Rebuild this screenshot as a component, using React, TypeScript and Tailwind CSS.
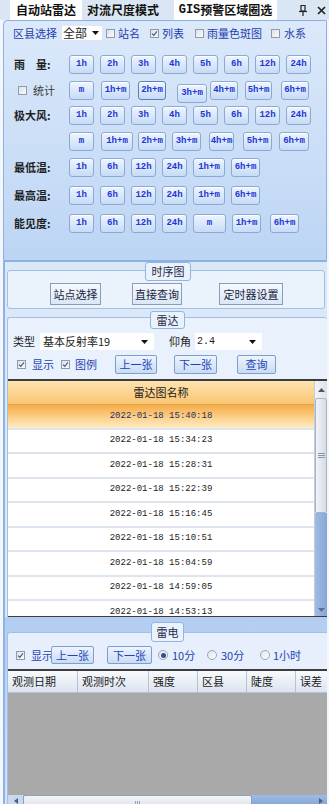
import React from "react";

type BtnProps = { t: string; c: string };

// 小时按钮（蓝色粗体等宽字）
const HBtn = ({ t, c }: BtnProps) => (
  <div
    className={`flex h-[19px] shrink-0 items-center justify-center rounded-[3px] border bg-gradient-to-b from-[#eef5fe] to-[#c6dbf7] font-['Liberation_Mono',monospace] text-[9px] leading-none font-bold whitespace-nowrap text-[#2236d6] shadow-[inset_0_1px_0_#ffffff] ${c}`}
  >
    {t}
  </div>
);

const RBtn = ({ t, c }: BtnProps) => (
  <div
    className={`flex shrink-0 items-center justify-center rounded-[2px] border border-[#7f9ecb] bg-gradient-to-b from-[#edf4fd] to-[#c9dcf5] text-[11px] leading-none whitespace-nowrap text-[#2343b5] ${c}`}
  >
    {t}
  </div>
);

const Lbl = ({ t }: { t: string }) => (
  <div className="w-[55px] shrink-0 text-[11px] leading-none font-bold whitespace-nowrap text-[#1e1e1e]">{t}</div>
);

const Check = ({ on, c = "" }: { on?: boolean; c?: string }) => (
  <span
    className={`relative inline-block h-[9px] w-[9px] shrink-0 border border-[#8e9bad] bg-gradient-to-br from-[#dde2e8] to-[#fbfbfb] ${c}`}
  >
    {on && (
      <svg viewBox="0 0 7 7" className="absolute inset-0 h-full w-full">
        <path d="M1 3.6 L2.8 5.3 L6 1.4" fill="none" stroke="#4a5f82" strokeWidth="1.2" />
      </svg>
    )}
  </span>
);

const Radio = ({ on, c = "" }: { on?: boolean; c?: string }) => (
  <span
    className={`flex h-[10px] w-[10px] shrink-0 items-center justify-center rounded-full border border-[#9aa7b8] bg-gradient-to-br from-[#dfe4ea] to-[#ffffff] ${c}`}
  >
    {on && <span className="h-[5px] w-[5px] rounded-full bg-[#2d4f96]" />}
  </span>
);

const Arrow = () => (
  <svg width="7" height="4" viewBox="0 0 7 4" className="shrink-0">
    <path d="M0 0 H7 L3.5 4 Z" fill="#111" />
  </svg>
);

const TabBar = () => (
  <div className="flex h-[20px] shrink-0 items-stretch bg-[#dbe6f4] text-[12px] leading-none font-bold whitespace-nowrap text-[#111]">
    <div className="ml-[10px] flex w-[72px] items-center justify-center bg-white">自动站雷达</div>
    <div className="ml-[2px] flex w-[78px] items-center justify-center">对流尺度模式</div>
    <div className="ml-[12px] flex w-[103px] items-center justify-center bg-white">
      <span className="font-['Liberation_Mono',monospace]">GIS</span>预警区域圈选
    </div>
    <div className="ml-[22px] flex items-center">
      <svg width="8" height="11" viewBox="0 0 8 11">
        <path d="M2 0.5 H6 V6 H2 Z" fill="none" stroke="#222" strokeWidth="1.2" />
        <path d="M0 6.5 H8" stroke="#222" strokeWidth="1.2" />
        <path d="M4 6.5 V11" stroke="#222" strokeWidth="1.2" />
      </svg>
    </div>
    <div className="ml-[10px] flex items-center">
      <svg width="9" height="9" viewBox="0 0 9 9">
        <path d="M1 1 L8 8 M8 1 L1 8" stroke="#222" strokeWidth="1.7" />
      </svg>
    </div>
  </div>
);

const TopPanel = () => (
  <div className="flex h-[241px] shrink-0 flex-col rounded-tl-[4px] border border-[#8db0de] bg-gradient-to-b from-[#dce9fa] to-[#bcd5f4]">
    {/* 区县选择 */}
    <div className="mt-[5px] flex h-[14px] items-center text-[11px] leading-none whitespace-nowrap">
      <span className="ml-[9px] w-[44px] text-[#1f3fae]">区县选择</span>
      <div className="ml-[5px] flex h-[14px] w-[40px] items-center justify-between bg-white pr-[3px] pl-[1px] text-[12px]">
        <span>全部</span>
        <Arrow />
      </div>
      <Check c="ml-[4px]" />
      <span className="ml-[3px] w-[24px] text-[#1f3fae]">站名</span>
      <Check on c="ml-[8px]" />
      <span className="ml-[3px] w-[24px] text-[#1f3fae]">列表</span>
      <Check c="ml-[9px]" />
      <span className="ml-[3px] w-[56px] text-[#1f3fae]">雨量色斑图</span>
      <Check c="ml-[8px]" />
      <span className="ml-[4px] text-[#1f3fae]">水系</span>
    </div>

    {/* 雨量 */}
    <div className="mt-[15px] flex h-[19px] items-center pl-[10px]">
      <Lbl t="雨　量:" />
      <HBtn t="1h" c="w-[25px] border-[#8ea9d1]" />
      <HBtn t="2h" c="ml-[6px] w-[25px] border-[#8ea9d1]" />
      <HBtn t="3h" c="ml-[6px] w-[25px] border-[#8ea9d1]" />
      <HBtn t="4h" c="ml-[6px] w-[25px] border-[#8ea9d1]" />
      <HBtn t="5h" c="ml-[6px] w-[25px] border-[#8ea9d1]" />
      <HBtn t="6h" c="ml-[6px] w-[25px] border-[#8ea9d1]" />
      <HBtn t="12h" c="ml-[6px] w-[25px] border-[#8ea9d1]" />
      <HBtn t="24h" c="ml-[6px] w-[25px] border-[#8ea9d1]" />
    </div>

    {/* 统计 */}
    <div className="mt-[7px] flex h-[19px] items-center pl-[14px]">
      <Check />
      <span className="ml-[6px] w-[36px] text-[11px] leading-none whitespace-nowrap text-[#3a3a3a]">统计</span>
      <HBtn t="m" c="w-[25px] border-[#8ea9d1]" />
      <HBtn t="1h+m" c="ml-[7px] w-[29px] border-[#8ea9d1]" />
      <HBtn t="2h+m" c="ml-[8px] w-[28px] border-[#5f7fae]" />
      <HBtn t="3h+m" c="ml-[11px] mt-[6px] w-[30px] border-[#8ea9d1]" />
      <HBtn t="4h+m" c="ml-[3px] w-[28px] border-[#8ea9d1]" />
      <HBtn t="5h+m" c="ml-[7px] w-[27px] border-[#8ea9d1]" />
      <HBtn t="6h+m" c="ml-[9px] w-[28px] border-[#8ea9d1]" />
    </div>

    {/* 极大风 */}
    <div className="mt-[6px] flex h-[19px] items-center pl-[10px]">
      <Lbl t="极大风:" />
      <HBtn t="1h" c="w-[25px] border-[#8ea9d1]" />
      <HBtn t="2h" c="ml-[6px] w-[25px] border-[#8ea9d1]" />
      <HBtn t="3h" c="ml-[6px] w-[25px] border-[#8ea9d1]" />
      <HBtn t="4h" c="ml-[6px] w-[25px] border-[#8ea9d1]" />
      <HBtn t="5h" c="ml-[6px] w-[25px] border-[#8ea9d1]" />
      <HBtn t="6h" c="ml-[6px] w-[25px] border-[#8ea9d1]" />
      <HBtn t="12h" c="ml-[6px] w-[25px] border-[#8ea9d1]" />
      <HBtn t="24h" c="ml-[6px] w-[25px] border-[#8ea9d1]" />
    </div>
    <div className="mt-[7px] flex h-[19px] items-center pl-[65px]">
      <HBtn t="m" c="w-[25px] border-[#8ea9d1]" />
      <HBtn t="1h+m" c="ml-[7px] w-[32px] border-[#8ea9d1]" />
      <HBtn t="2h+m" c="ml-[5px] w-[28px] border-[#8ea9d1]" />
      <HBtn t="3h+m" c="ml-[6px] w-[29px] border-[#8ea9d1]" />
      <HBtn t="4h+m" c="ml-[8px] w-[25px] border-[#8ea9d1]" />
      <HBtn t="5h+m" c="ml-[9px] w-[29px] border-[#8ea9d1]" />
      <HBtn t="6h+m" c="ml-[7px] w-[30px] border-[#8ea9d1]" />
    </div>

    {/* 最低温 */}
    <div className="mt-[7px] flex h-[19px] items-center pl-[10px]">
      <Lbl t="最低温:" />
      <HBtn t="1h" c="w-[25px] border-[#8ea9d1]" />
      <HBtn t="6h" c="ml-[6px] w-[25px] border-[#8ea9d1]" />
      <HBtn t="12h" c="ml-[6px] w-[25px] border-[#8ea9d1]" />
      <HBtn t="24h" c="ml-[6px] w-[25px] border-[#8ea9d1]" />
      <HBtn t="1h+m" c="ml-[6px] w-[32px] border-[#8ea9d1]" />
      <HBtn t="6h+m" c="ml-[6px] w-[29px] border-[#8ea9d1]" />
    </div>

    {/* 最高温 */}
    <div className="mt-[9px] flex h-[19px] items-center pl-[10px]">
      <Lbl t="最高温:" />
      <HBtn t="1h" c="w-[25px] border-[#8ea9d1]" />
      <HBtn t="6h" c="ml-[6px] w-[25px] border-[#8ea9d1]" />
      <HBtn t="12h" c="ml-[6px] w-[25px] border-[#8ea9d1]" />
      <HBtn t="24h" c="ml-[6px] w-[25px] border-[#8ea9d1]" />
      <HBtn t="1h+m" c="ml-[6px] w-[32px] border-[#8ea9d1]" />
      <HBtn t="6h+m" c="ml-[6px] w-[29px] border-[#8ea9d1]" />
    </div>

    {/* 能见度 */}
    <div className="mt-[9px] flex h-[19px] items-center pl-[10px]">
      <Lbl t="能见度:" />
      <HBtn t="1h" c="w-[25px] border-[#8ea9d1]" />
      <HBtn t="6h" c="ml-[6px] w-[25px] border-[#8ea9d1]" />
      <HBtn t="12h" c="ml-[6px] w-[25px] border-[#8ea9d1]" />
      <HBtn t="24h" c="ml-[6px] w-[25px] border-[#8ea9d1]" />
      <HBtn t="m" c="ml-[6px] w-[33px] border-[#8ea9d1]" />
      <HBtn t="1h+m" c="ml-[6px] w-[29px] border-[#8ea9d1]" />
      <HBtn t="6h+m" c="ml-[9px] w-[29px] border-[#8ea9d1]" />
    </div>
  </div>
);

const GroupLabel = ({ t, c }: { t: string; c: string }) => (
  <div
    className={`absolute flex items-center justify-center rounded-[3px] border border-[#93b3e0] bg-[#eaf2fc] text-[11px] leading-none whitespace-nowrap text-[#1e2a4a] ${c}`}
  >
    {t}
  </div>
);

const SeqGroup = () => (
  <div className="h-[50px] shrink-0 border-t border-[#8db0de] pt-[8px] pr-[2px] pl-[2px]">
    <div className="relative flex h-[39px] items-start rounded-[3px] border border-[#a3bfe6] bg-[#eaf2fc]">
      <GroupLabel t="时序图" c="top-[-9px] left-[137px] h-[19px] w-[46px]" />
      {["站点选择", "直接查询", "定时器设置"].map((t, i) => (
        <div
          key={t}
          className={`mt-[12px] flex h-[22px] items-center justify-center border border-[#8b9cb8] bg-gradient-to-b from-[#f5f9fe] to-[#dbe7f6] text-[11px] leading-none whitespace-nowrap text-[#1a2540] ${
            i === 0 ? "ml-[42px] w-[51px]" : i === 1 ? "ml-[31px] w-[50px]" : "ml-[37px] w-[64px]"
          }`}
        >
          {t}
        </div>
      ))}
    </div>
  </div>
);

const times = [
  "2022-01-18 15:40:18",
  "2022-01-18 15:34:23",
  "2022-01-18 15:28:31",
  "2022-01-18 15:22:39",
  "2022-01-18 15:16:45",
  "2022-01-18 15:10:51",
  "2022-01-18 15:04:59",
  "2022-01-18 14:59:05",
  "2022-01-18 14:53:13",
];

const VScroll = () => (
  <div className="flex w-[13px] shrink-0 flex-col border-l border-[#c3ccd9] bg-[#eef1f5]">
    <div className="flex h-[17px] shrink-0 items-center justify-center bg-gradient-to-r from-[#f3f5f8] to-[#dce2ea]">
      <svg width="7" height="4" viewBox="0 0 7 4">
        <path d="M0 4 H7 L3.5 0 Z" fill="#555" />
      </svg>
    </div>
    <div className="flex h-[115px] shrink-0 items-center justify-center rounded-[2px] border border-[#a8b5c7] bg-gradient-to-r from-[#f1f3f7] to-[#d6dce5]">
      <svg width="7" height="5" viewBox="0 0 7 5">
        <path d="M0 0.5 H7 M0 2.5 H7 M0 4.5 H7" stroke="#8a96a8" strokeWidth="1" />
      </svg>
    </div>
    <div className="flex-1 bg-gradient-to-r from-[#a1bce3] to-[#86a6d6]" />
    <div className="flex h-[13px] shrink-0 items-center justify-center bg-gradient-to-r from-[#a1bce3] to-[#86a6d6]">
      <svg width="7" height="4" viewBox="0 0 7 4">
        <path d="M0 0 H7 L3.5 4 Z" fill="#5b6f90" />
      </svg>
    </div>
  </div>
);

const RadarGroup = () => (
  <div className="h-[306px] shrink-0 pt-[6px] pl-[2px]">
    <div className="relative flex h-[300px] flex-col rounded-t-[3px] border-t border-l border-[#a3bfe6] bg-[#e9f1fc]">
      <GroupLabel t="雷达" c="top-[-7px] left-[142px] h-[18px] w-[35px]" />

      <div className="mt-[15px] flex h-[17px] items-center text-[11px] leading-none whitespace-nowrap">
        <span className="ml-[5px] w-[24px]">类型</span>
        <div className="ml-[3px] flex h-[17px] w-[114px] items-center justify-between bg-white pr-[6px] pl-[3px]">
          <span>基本反射率19</span>
          <Arrow />
        </div>
        <span className="ml-[15px] w-[22px]">仰角</span>
        <div className="ml-[4px] flex h-[17px] w-[67px] items-center justify-between bg-white pr-[6px] pl-[2px]">
          <span className="font-['Liberation_Mono',monospace] text-[10px]">2.4</span>
          <Arrow />
        </div>
      </div>

      <div className="mt-[5px] flex h-[19px] items-center text-[11px] leading-none whitespace-nowrap text-[#2343b5]">
        <Check on c="ml-[9px]" />
        <span className="ml-[6px] w-[24px]">显示</span>
        <Check on c="ml-[5px]" />
        <span className="ml-[5px] w-[24px]">图例</span>
        <RBtn t="上一张" c="ml-[16px] h-[19px] w-[42px]" />
        <RBtn t="下一张" c="ml-[17px] h-[19px] w-[43px]" />
        <RBtn t="查询" c="ml-[20px] h-[19px] w-[39px]" />
      </div>

      <div className="mt-[5px] flex h-[238px] border-t-2 border-b border-[#3c3c3c] bg-white">
        <div className="flex min-w-0 flex-1 flex-col overflow-hidden">
          <div className="flex h-[24px] shrink-0 items-center justify-center border-b border-[#dca650] bg-gradient-to-b from-[#fee3ae] to-[#f9c572] text-[11px] leading-none text-[#1a1a1a]">
            雷达图名称
          </div>
          {times.map((t, i) => (
            <div
              key={t}
              className={`flex h-[24.5px] shrink-0 items-center justify-center border-b-2 border-[#dfe5ee] font-['Liberation_Mono',monospace] text-[9px] leading-none whitespace-nowrap ${
                i === 0
                  ? "bg-gradient-to-b from-[#f7ab45] via-[#fbcd82] to-[#feedc6] text-[#1f2d6b]"
                  : "bg-white text-[#222222]"
              }`}
            >
              {t}
            </div>
          ))}
        </div>
        <VScroll />
      </div>
    </div>
  </div>
);

const cols = [
  { t: "观测日期", w: "w-[70px]" },
  { t: "观测时次", w: "w-[71px]" },
  { t: "强度", w: "w-[49px]" },
  { t: "区县", w: "w-[49px]" },
  { t: "陡度", w: "w-[49px]" },
  { t: "误差", w: "w-[49px]" },
];

const LightningGroup = () => (
  <div className="flex flex-1 flex-col bg-gradient-to-b from-[#b2cdf1] to-[#d3e3f8] pt-[15px] pl-[2px]">
    <div className="relative flex flex-1 flex-col rounded-tl-[3px] border-t border-l border-[#a3bfe6] bg-[#e6effb]">
      <GroupLabel t="雷电" c="top-[-11px] left-[143px] h-[20px] w-[33px]" />

      <div className="mt-[13px] flex h-[18px] items-center text-[11px] leading-none whitespace-nowrap text-[#2343b5]">
        <Check on c="ml-[8px]" />
        <span className="ml-[6px] w-[20px]">显示</span>
        <RBtn t="上一张" c="h-[18px] w-[43px]" />
        <RBtn t="下一张" c="ml-[13px] h-[18px] w-[45px]" />
        <Radio on c="ml-[6px]" />
        <span className="ml-[4px] w-[24px]">10分</span>
        <Radio c="ml-[11px]" />
        <span className="ml-[4px] w-[24px]">30分</span>
        <Radio c="ml-[15px]" />
        <span className="ml-[3px]">1小时</span>
      </div>

      <div className="mt-[5px] flex h-[24px] shrink-0 overflow-hidden border-t-2 border-[#3c3c3c] bg-gradient-to-b from-[#f8fafc] to-[#dbe3ee]">
        {cols.map((c) => (
          <div
            key={c.t}
            className={`flex shrink-0 items-center border-r border-b border-[#b3c2d6] pl-[4px] text-[11px] leading-none whitespace-nowrap text-[#1a1a1a] ${c.w}`}
          >
            {c.t}
          </div>
        ))}
      </div>
      <div className="h-[102px] shrink-0 bg-[#a9a9a9]" />
      <div className="flex h-[9px] shrink-0 items-start bg-gradient-to-b from-[#9fbbe3] to-[#88a8d8]">
        <div className="flex h-[12px] w-[15px] shrink-0 items-center justify-center bg-[#c7d8ef]">
          <svg width="4" height="6" viewBox="0 0 4 6">
            <path d="M4 0 V6 L0 3 Z" fill="#4d5f7c" />
          </svg>
        </div>
        <div className="flex h-[12px] w-[229px] shrink-0 justify-center rounded-[2px] border border-[#8fa1ba] bg-gradient-to-b from-[#f3f5f8] to-[#dfe4eb] pt-[5px]">
          <svg width="6" height="4" viewBox="0 0 6 4">
            <path d="M0.5 0 V4 M2.5 0 V4 M4.5 0 V4" stroke="#98a3b3" strokeWidth="1" />
          </svg>
        </div>
        <div className="flex-1" />
        <div className="flex w-[12px] shrink-0 justify-center pt-[3px]">
          <svg width="4" height="6" viewBox="0 0 4 6">
            <path d="M0 0 V6 L4 3 Z" fill="#4d5f7c" />
          </svg>
        </div>
      </div>
    </div>
  </div>
);

export default function App() {
  return (
    <div className="flex h-[804px] w-[329px] flex-col overflow-hidden bg-[#f3f6fa] font-['Noto_Sans_CJK_SC',sans-serif] text-[#1e1e1e]">
      <TabBar />
      <div className="ml-[3px] flex w-[324px] flex-1 flex-col">
        <TopPanel />
        <div className="flex flex-1 flex-col border-l-2 border-[#8fb2e2] bg-[#dbe8f8]">
          <SeqGroup />
          <RadarGroup />
          <LightningGroup />
        </div>
      </div>
    </div>
  );
}
